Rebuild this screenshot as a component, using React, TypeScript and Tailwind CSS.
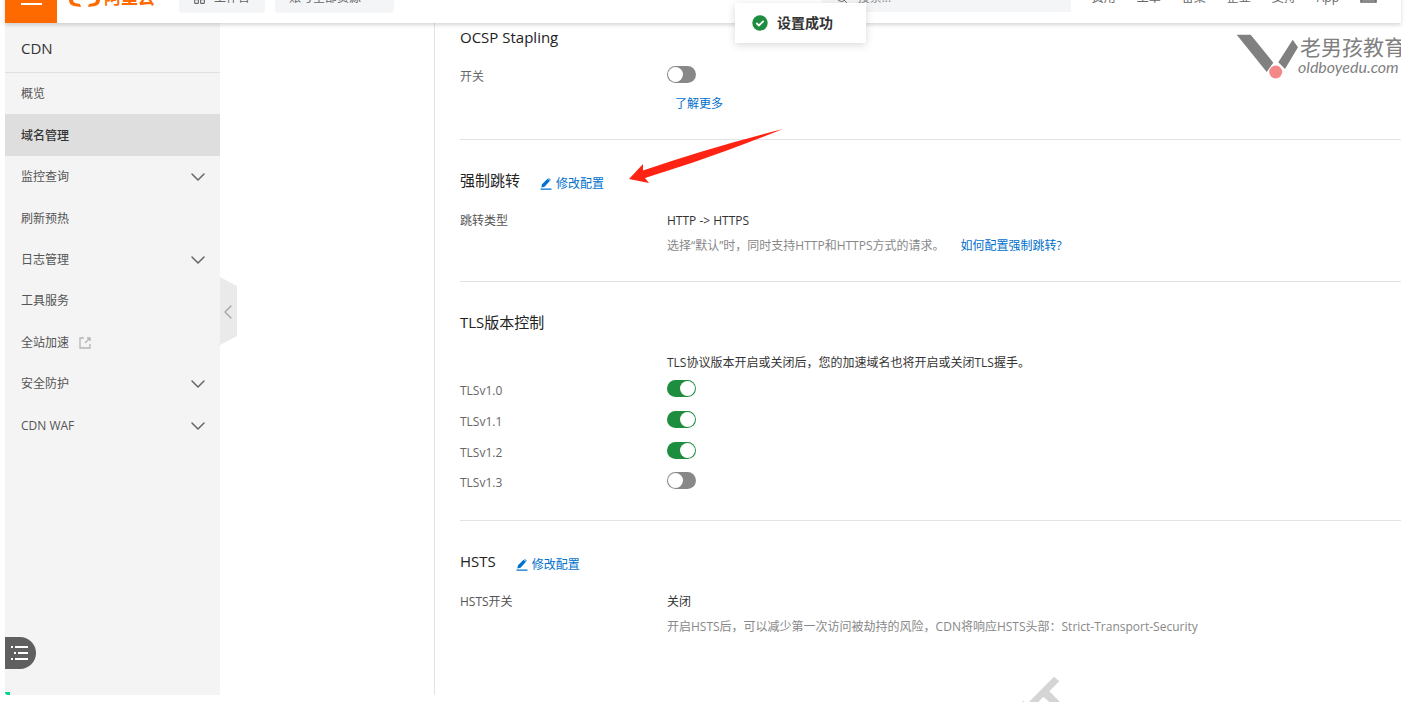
import React, { useState } from 'react';
import { ChevronDown, ChevronLeft, LayoutGrid, Search } from 'lucide-react';

interface MenuItem {
  text: string;
  expandable?: boolean;
  external?: boolean;
}

const menuItems: MenuItem[] = [
  { text: '概览' },
  { text: '域名管理' },
  { text: '监控查询', expandable: true },
  { text: '刷新预热' },
  { text: '日志管理', expandable: true },
  { text: '工具服务' },
  { text: '全站加速', external: true },
  { text: '安全防护', expandable: true },
  { text: 'CDN WAF', expandable: true },
];

const navLinks = ['费用', '工单', '备案', '企业', '支持', 'App'];

const Header: React.FC = () => (
  // the page is scrolled a little, so only the lower half of the bar shows
  <header className="relative z-10 -mt-[27px] flex h-[50px] shrink-0 items-center bg-white text-[12px] text-[#666] shadow-[0_2px_4px_rgba(0,0,0,0.16)]">
    <button aria-label="菜单" className="flex h-full w-[52px] flex-col items-center justify-end bg-[#ff6a00] pb-[18px]">
      <span className="h-[2px] w-[21px] bg-white" />
    </button>
    <a href="#" className="ml-3 flex items-center text-[17px] leading-5 font-bold text-[#ff6a00]">
      <svg className="mr-1 h-5 w-[31px]" viewBox="0 0 31 20" fill="#ff6a00">
        <path d="M12 0H6Q0 0 0 6v6q0 5 5 6l7 1-1-3-5-1q-2-.5-2-3V7q0-3 2-3l5-1zM19 0h6q6 0 6 6v6q0 5-5 6l-7 1 1-3 5-1q2-.5 2-3V7q0-3-2-3l-5-1zM12 8h7v2h-7z" />
      </svg>
      阿里云
    </a>
    <button className="ml-6 flex h-[30px] w-[86px] items-center gap-2 rounded-sm bg-[#f4f5f6] pl-[14px]">
      <LayoutGrid size={13} />
      工作台
    </button>
    <button className="ml-[10px] flex h-[30px] w-[119px] items-center rounded-sm bg-[#f4f5f6] pl-[14px]">
      账号全部资源
    </button>
    <label className="ml-auto flex h-7 w-[249px] items-center gap-[10px] bg-[#f4f5f6] pl-[14px]">
      <Search size={12} />
      <input type="text" placeholder="搜索..." className="w-40 bg-transparent outline-none placeholder:text-[#888]" />
    </label>
    <nav className="ml-[21px] flex items-center gap-[21px]">
      {navLinks.map((text) => (
        <a key={text} href="#">
          {text}
        </a>
      ))}
      <svg width="17" height="14" viewBox="0 0 17 14" fill="none" stroke="currentColor" strokeWidth="1.5">
        <path d="M1 1h15v10H1zM3 3l3 2-3 2M1 9h15" />
      </svg>
    </nav>
    <span className="w-[24px] shrink-0" />
  </header>
);

const Sidebar: React.FC = () => {
  const [selectedItem, setSelectedItem] = useState('域名管理');

  return (
    <aside className="relative w-[215px] shrink-0 bg-[#f4f4f4]">
      <h2 className="flex h-[50px] items-center border-b border-[#e0e0e0] pl-4 text-[15px] text-[#333]">CDN</h2>
      <nav className="grid h-[373px] auto-rows-fr">
        {menuItems.map((item) => (
          <button
            key={item.text}
            onClick={() => setSelectedItem(item.text)}
            className={`flex cursor-pointer items-center pt-px pr-[10px] pl-4 text-left text-[12px] ${
              selectedItem === item.text ? 'bg-[#dedede] font-medium text-[#333]' : 'text-[#555]'
            }`}
          >
            {item.text}
            {item.external && (
              <svg className="ml-[10px] h-3 w-3 text-[#b5b5b5]" viewBox="0 0 12 12" fill="none" stroke="currentColor" strokeWidth="1.3">
                <path d="M5 1H1v10h10V7M8 1h3v3M11 1L6 6" />
              </svg>
            )}
            {item.expandable && <ChevronDown className="ml-auto text-[#666]" size={24} strokeWidth={1.5} />}
          </button>
        ))}
      </nav>
      <button aria-label="收起" className="absolute top-[254px] left-full h-[68px] w-[17px]">
        <svg className="absolute inset-0" width="17" height="68" viewBox="0 0 17 68" fill="#eaeaea">
          <path d="M0 0L17 9V59L0 68Z" />
        </svg>
        <ChevronLeft className="absolute top-[23px] -left-1 text-[#aaa]" size={24} strokeWidth={1.5} />
      </button>
      <button aria-label="目录" className="absolute bottom-[26px] left-0 flex h-8 w-[31px] items-center rounded-r-full bg-[#5f5f5f] pl-[6px]">
        <svg width="18" height="16" viewBox="0 0 18 16" fill="#fff">
          <path d="M0 1h2v2H0zM4 1h13v2H4zM3 7h2v2H3zM7 7h10v2H7zM0 13h2v2H0zM4 13h13v2H4z" />
        </svg>
      </button>
      <span className="absolute bottom-0 left-0 h-[3px] w-[5px] rounded-bl-sm bg-[#00d68f]" />
    </aside>
  );
};

interface SwitchProps {
  id: string;
  label: string;
  defaultOn?: boolean;
}

const SwitchRow: React.FC<SwitchProps> = ({ id, label, defaultOn = false }) => {
  const [on, setOn] = useState(defaultOn);

  return (
    <div className="flex items-start">
      <label htmlFor={id} className="w-[207px] pt-px text-[#666]">{label}</label>
      <span className={`relative flex h-[17px] w-[29px] rounded-full p-px ${on ? 'justify-end bg-[#1e8e3e]' : 'bg-[#888]'}`}>
        <span className="h-[15px] w-[15px] rounded-full bg-white" />
        <input
          id={id}
          type="checkbox"
          role="switch"
          checked={on}
          onChange={() => setOn(!on)}
          className="absolute inset-0 h-full w-full cursor-pointer opacity-0"
        />
      </span>
    </div>
  );
};

const EditLink: React.FC = () => (
  <a href="#" className="mt-2 ml-5 flex items-center text-[12px] text-[#0070cc]">
    <svg className="mr-1 h-3 w-3" viewBox="0 0 12 12" fill="currentColor">
      <path d="M0.5 10.4h11v1.4h-11zM1.3 9.5l.7-3.200L7.600.8l2.400 2L4.500 8.800zM8.200.3l.6-.3 2 1.800-.4.600z" />
    </svg>
    修改配置
  </a>
);

interface SectionProps {
  title: string;
  editable?: boolean;
  className: string;
  children: React.ReactNode;
}

const Section: React.FC<SectionProps> = ({ title, editable, className, children }) => (
  <section className={`border-[#e3e3e3] ${className}`}>
    <div className="mb-[17px] flex h-6 items-center">
      <h3 className="text-[15px] leading-6 text-[#222]">{title}</h3>
      {editable && <EditLink />}
    </div>
    {children}
  </section>
);

const tlsVersions = [
  { name: 'TLSv1.0', on: true },
  { name: 'TLSv1.1', on: true },
  { name: 'TLSv1.2', on: true },
  { name: 'TLSv1.3', on: false },
];

const Toast: React.FC = () => (
  <div role="status" className="absolute top-[3px] left-[735px] z-20 flex h-10 w-[131px] items-center gap-[9px] bg-white pl-[17px] text-[14px] font-bold text-[#333] shadow-[0_2px_8px_rgba(0,0,0,0.15)]">
    <svg width="16" height="16" viewBox="0 0 16 16">
      <circle cx="8" cy="8" r="7.7" fill="#1e8e3e" />
      <path d="M4.3 8l2.6 2.5 4.8-4.7" fill="none" stroke="#fff" strokeWidth="1.8" />
    </svg>
    设置成功
  </div>
);

const Brand: React.FC = () => (
  <div className="absolute top-[34px] right-0 flex w-[165px] overflow-hidden text-[#808080]">
    <svg className="shrink-0" width="62" height="46" viewBox="0 0 62 46" fill="#808080">
      <path d="M0.7 0.7H14.7L37.3 28.7L30.7 38ZM56.7 5.7L62 13.3L49 35L42.3 28.3Z" />
      <circle cx="39.7" cy="38" r="6.5" fill="#f48788" />
    </svg>
    <div className="pt-px whitespace-nowrap">
      <p className="pl-0.5 text-[21px] leading-6">老男孩教育</p>
      <p className="font-['Lato'] text-[16px] leading-4 italic">oldboyedu.com</p>
    </div>
  </div>
);

const App: React.FC = () => (
  <div className="relative flex h-screen flex-col overflow-hidden bg-white pr-[21px] pb-[7px] pl-[5px] font-['Open_Sans','Noto_Sans_CJK_SC',sans-serif] text-[12px] leading-5 text-[#333]">
    <Header />
    <div className="flex min-h-0 flex-1">
      <Sidebar />
      <main className="ml-[214px] min-w-0 flex-1 border-l border-[#e3e3e3] pl-[25px]">
        <Section title="OCSP Stapling" className="border-b pt-[2px] pb-[25px]">
          <SwitchRow id="ocsp" label="开关" />
          <a href="#" className="mt-[7px] ml-[207px] block pl-2 text-[#0070cc]">了解更多</a>
        </Section>

        <Section title="强制跳转" editable className="border-b pt-7 pb-[25px]">
          <dl className="flex pt-[2px]">
            <dt className="w-[207px] text-[#555]">跳转类型</dt>
            <dd>
              HTTP -&gt; HTTPS
              <p className="mt-[5px] flex gap-4 text-[#888]">
                选择“默认”时，同时支持HTTP和HTTPS方式的请求。
                <a href="#" className="text-[#0070cc]">如何配置强制跳转?</a>
              </p>
            </dd>
          </dl>
        </Section>

        <Section title="TLS版本控制" className="border-b pt-7 pb-[17px]">
          <p className="pt-[2px] pl-[207px]">TLS协议版本开启或关闭后，您的加速域名也将开启或关闭TLS握手。</p>
          <div className="mt-[7px] grid h-[123px] auto-rows-fr">
            {tlsVersions.map((version) => (
              <SwitchRow key={version.name} id={version.name} label={version.name} defaultOn={version.on} />
            ))}
          </div>
        </Section>

        <Section title="HSTS" editable className="pt-7">
          <dl className="flex pt-[2px]">
            <dt className="w-[207px] text-[#555]">HSTS开关</dt>
            <dd>
              关闭
              <p className="mt-[5px] text-[#888]">
                开启HSTS后，可以减少第一次访问被劫持的风险，CDN将响应HSTS头部：Strict-Transport-Security
              </p>
            </dd>
          </dl>
        </Section>
      </main>
    </div>

    <Toast />
    <div className="absolute inset-y-0 right-[21px]">
      <Brand />
    </div>
    {/* arrow pointing at the redirect settings */}
    <svg className="pointer-events-none absolute top-[128px] left-[628px]" width="156" height="58" viewBox="0 0 156 58" fill="#ff2313">
      <path d="M1 51L15 36V42.500Q80 20 155 1Q110 19 65 34.500L17 50L21 55Z" />
    </svg>
    {/* corner of the diagonal page watermark */}
    <svg className="pointer-events-none absolute bottom-0 left-[1022px]" width="40" height="26" viewBox="0 0 40 26" fill="#d5d5d5">
      <path d="M32 0.700L37.300 5.300L27.300 15.300L38 26H27.300L21.300 20.700L16.300 26H7ZM0 26L1 24.500L2.500 26Z" />
    </svg>
  </div>
);

export default App;
